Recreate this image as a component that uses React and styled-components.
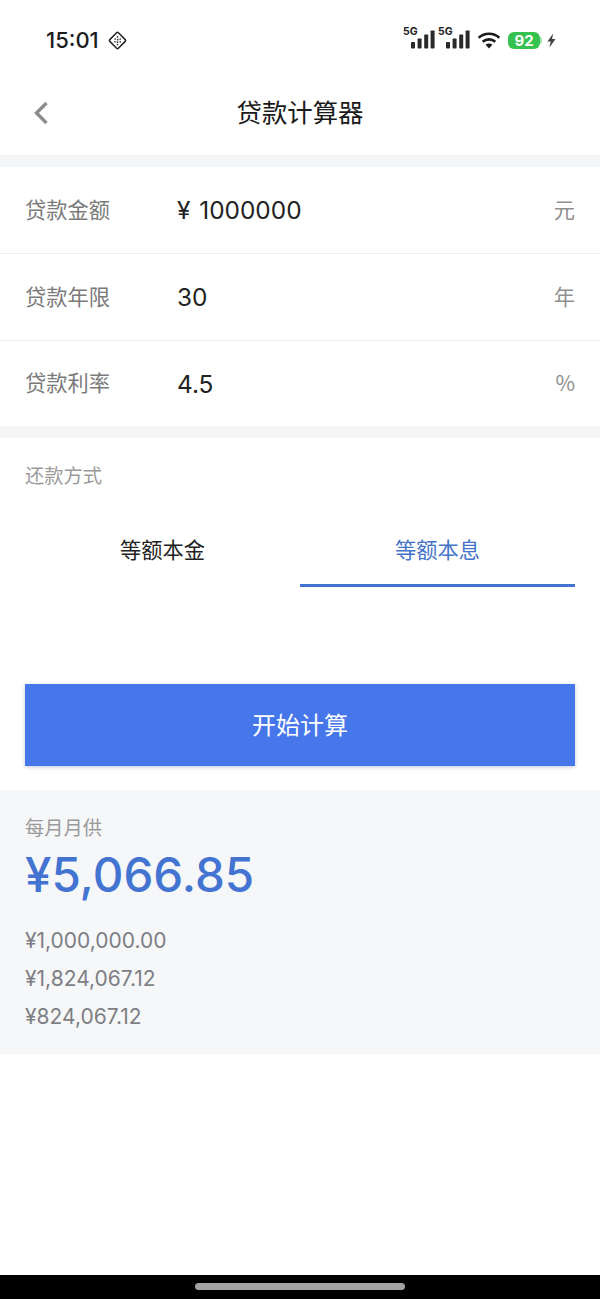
import styled, { createGlobalStyle } from 'styled-components';

const FONT = `"Noto Sans CJK SC", "Noto Sans", sans-serif`;
const LATIN = `"Inter", "Noto Sans", "Noto Sans CJK SC", sans-serif`;

const GlobalStyle = createGlobalStyle`
    html, body { margin: 0; padding: 0; background: #fff; }
    body { font-family: ${FONT}; }
`;

const fields = [
    { label: '贷款金额', value: '¥ 1000000', unit: '元' },
    { label: '贷款年限', value: '30', unit: '年' },
    { label: '贷款利率', value: '4.5', unit: '%' },
];

const details = ['¥1,000,000.00', '¥1,824,067.12', '¥824,067.12'];

function NfcIcon() {
    return (
        <svg width="21" height="21" viewBox="0 0 20 20" fill="none">
            <rect x="4.2" y="4.2" width="11.6" height="11.6" rx="1.2" transform="rotate(45 10 10)" stroke="#222" strokeWidth="1.4" />
            <g fill="#333">
                <circle cx="10" cy="6.6" r=".8" /><circle cx="7.8" cy="8.6" r=".8" /><circle cx="10.2" cy="9.2" r=".8" />
                <circle cx="12.6" cy="8.6" r=".8" /><circle cx="7.6" cy="11.2" r=".8" /><circle cx="10" cy="11.6" r=".8" />
                <circle cx="12.6" cy="11.2" r=".8" /><circle cx="10" cy="13.8" r=".8" />
            </g>
        </svg>
    );
}

function Signal() {
    return (
        <SignalWrap>
            <FiveG>5G</FiveG>
            <svg width="24" height="19" viewBox="0 0 24 19" fill="#2a2a2a">
                <rect x="0" y="12" width="4" height="6.5" rx=".8" />
                <rect x="6.6" y="8.5" width="4" height="10" rx=".8" />
                <rect x="13.2" y="4.5" width="4" height="14" rx=".8" />
                <rect x="19.6" y="0.5" width="4" height="18" rx=".8" />
            </svg>
        </SignalWrap>
    );
}

function Wifi() {
    return (
        <svg width="24" height="18" viewBox="0 0 26 20" fill="none" stroke="#1c1c1c" strokeWidth="2.8">
            <path d="M1.5 7.5C8 1.5 18 1.5 24.5 7.5" />
            <path d="M6 12C10 8.4 16 8.4 20 12" />
            <path d="M13 19.5l-3.8-4.3c2.1-1.6 5.5-1.6 7.6 0z" fill="#1c1c1c" stroke="none" />
        </svg>
    );
}

function Bolt() {
    return (
        <svg width="9" height="15" viewBox="0 0 11 17" fill="#444">
            <path d="M7.5 0 0.5 9.8h4L3 17l7.5-10.4H6.2z" />
        </svg>
    );
}

export default function App() {
    return (
        <Page>
            <GlobalStyle />
            <StatusBar>
                <TimeGroup>
                    <Time>15:01</Time>
                    <NfcIcon />
                </TimeGroup>
                <StatusIcons>
                    <Signal />
                    <Signal />
                    <WifiSlot><Wifi /></WifiSlot>
                    <Battery>92</Battery>
                    <BatteryCap />
                    <Bolt />
                </StatusIcons>
            </StatusBar>

            <NavBar>
                <BackButton>
                    <svg width="16" height="24" viewBox="0 0 16 24" fill="none" stroke="#8c8c8c" strokeWidth="3.4">
                        <path d="M13.5 2 3.5 12l10 10" />
                    </svg>
                </BackButton>
                <NavTitle>贷款计算器</NavTitle>
            </NavBar>

            <Form>
                {fields.map((f) => (
                    <FieldRow key={f.label}>
                        <FieldLabel>{f.label}</FieldLabel>
                        <FieldValue>{f.value}</FieldValue>
                        <FieldUnit>{f.unit}</FieldUnit>
                    </FieldRow>
                ))}
            </Form>

            <MethodSection>
                <SectionLabel>还款方式</SectionLabel>
                <Tabs>
                    <Tab>等额本金</Tab>
                    <Tab $active>等额本息</Tab>
                </Tabs>
            </MethodSection>

            <SubmitButton>开始计算</SubmitButton>

            <Result>
                <ResultLabel>每月月供</ResultLabel>
                <ResultAmount>¥5,066.85</ResultAmount>
                <DetailList>
                    {details.map((d) => (
                        <Detail key={d}>{d}</Detail>
                    ))}
                </DetailList>
            </Result>

            <Spacer />
            <HomeBar>
                <HomeHandle />
            </HomeBar>
        </Page>
    );
}

const Page = styled.div`
    width: 600px;
    height: 1299px;
    display: flex;
    flex-direction: column;
    overflow: hidden;
    background: #fff;
`

const StatusBar = styled.div`
    height: 72px;
    padding: 8px 44px 0 46px;
    box-sizing: border-box;
    display: flex;
    align-items: center;
    justify-content: space-between;
    flex-shrink: 0;
`

const TimeGroup = styled.div`
    display: flex;
    align-items: center;
    gap: 8px;
`

const Time = styled.span`
    font-family: "Inter", sans-serif;
    font-size: 22px;
    font-weight: 500;
    color: #1c1c1c;
`

const StatusIcons = styled.div`
    display: flex;
    align-items: center;
`

const SignalWrap = styled.div`
    position: relative;
    width: 35px;
    height: 24px;
    box-sizing: border-box;
    padding: 0 0 3px 8px;
    display: flex;
    align-items: flex-end;
`

const FiveG = styled.span`
    position: absolute;
    left: 0;
    top: -3px;
    font-family: "Inter", sans-serif;
    font-size: 10.5px;
    font-weight: 700;
    color: #222;
`

const WifiSlot = styled.div`
    display: flex;
    margin: 0 7px 0 4px;
`

const Battery = styled.div`
    width: 32px;
    height: 17px;
    border-radius: 6px;
    background: #35c24f;
    color: #fff;
    font-family: "Inter", sans-serif;
    font-size: 15px;
    font-weight: 700;
    line-height: 17px;
    text-align: center;
`

const BatteryCap = styled.div`
    width: 2px;
    height: 7px;
    margin-right: 5px;
    background: #a9dfb4;
    border-radius: 0 2px 2px 0;
`

const NavBar = styled.div`
    height: 83px;
    position: relative;
    display: flex;
    align-items: center;
    justify-content: center;
    flex-shrink: 0;
`

const BackButton = styled.div`
    position: absolute;
    left: 33px;
    top: 29px;
    display: flex;
`

const NavTitle = styled.div`
    font-size: 25.4px;
    font-weight: 400;
    color: #1a1a1a;
    margin-top: -5px;
`

const Form = styled.div`
    border-top: 12px solid #f4f5f7;
    border-bottom: 12px solid #f4f5f7;
    flex-shrink: 0;
`

const FieldRow = styled.div`
    height: 87px;
    padding: 0 25px 4px;
    box-sizing: border-box;
    display: flex;
    align-items: center;
    border-bottom: 1px solid #eeeff1;

    &:last-child {
        height: 85px;
        border-bottom: none;
    }
`

const FieldLabel = styled.div`
    width: 152px;
    font-size: 21.25px;
    color: #7a7a7a;
`

const FieldValue = styled.div`
    flex: 1;
    margin-top: 4px;
    font-family: ${LATIN};
    font-size: 24.4px;
    font-weight: 400;
    word-spacing: 2px;
    color: #222;
`

const FieldUnit = styled.div`
    font-size: 21.25px;
    color: #8f8f8f;
`

const MethodSection = styled.div`
    padding-top: 23px;
    flex-shrink: 0;
`

const SectionLabel = styled.div`
    padding: 0 25px;
    font-size: 19.25px;
    line-height: 28px;
    color: #9a9a9a;
`

const Tabs = styled.div`
    display: flex;
    margin: 26px 25px 0;
`

const Tab = styled.div`
    flex: 1;
    height: 72px;
    box-sizing: border-box;
    display: flex;
    align-items: center;
    justify-content: center;
    padding-bottom: 2px;
    font-size: 21.25px;
    color: ${(p) => (p.$active ? '#4374c9' : '#222')};
    border-bottom: 3px solid ${(p) => (p.$active ? '#4374d1' : 'transparent')};
`

const SubmitButton = styled.div`
    margin: 97px 25px 0;
    height: 82px;
    padding-bottom: 4px;
    box-sizing: border-box;
    flex-shrink: 0;
    display: flex;
    align-items: center;
    justify-content: center;
    background: #4576ea;
    box-shadow: 0 1px 4px rgba(40, 70, 140, 0.3);
    color: #fff;
    font-size: 24px;
    font-weight: 400;
`

const Result = styled.div`
    margin-top: 24px;
    height: 264px;
    flex-shrink: 0;
    box-sizing: border-box;
    padding: 23px 25px 0;
    background: #f6f7f9;
`

const ResultLabel = styled.div`
    font-size: 19.25px;
    line-height: 28px;
    color: #9a9a9a;
`

const ResultAmount = styled.div`
    font-family: ${LATIN};
    font-size: 47.5px;
    font-weight: 500;
    line-height: 56px;
    color: #4374d1;
    margin-top: 6px;
`

const DetailList = styled.div`
    margin-top: 19px;
`

const Detail = styled.div`
    font-family: ${LATIN};
    font-size: 21px;
    line-height: 38px;
    color: #7d7f85;
`

const Spacer = styled.div`
    flex: 1;
`

const HomeBar = styled.div`
    height: 24px;
    flex-shrink: 0;
    background: #000;
    display: flex;
    justify-content: center;
    padding-top: 8px;
    box-sizing: border-box;
`

const HomeHandle = styled.div`
    width: 210px;
    height: 7px;
    border-radius: 4px;
    background: #a3a3a3;
`
